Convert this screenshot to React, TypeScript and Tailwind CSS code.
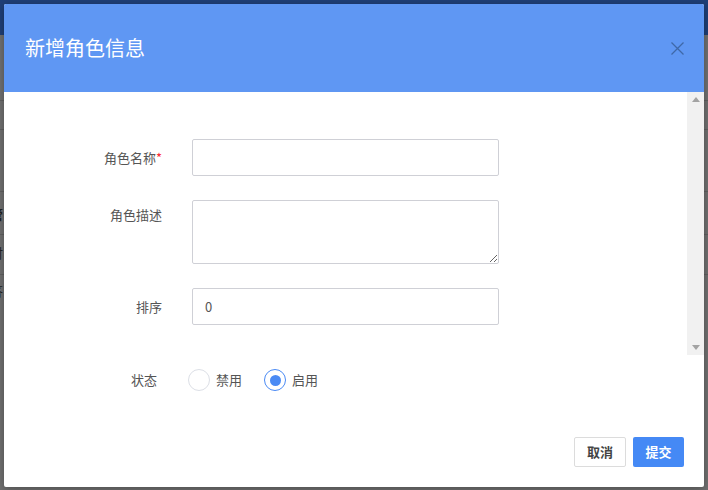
import { useState } from "react";

const font = { fontFamily: '"Noto Sans CJK SC", "Noto Sans", sans-serif' };

function Radio({ checked, label, onClick }: { checked: boolean; label: string; onClick: () => void }) {
  return (
    <button type="button" onClick={onClick} className="flex items-center gap-[6px]">
      <span
        className={
          checked
            ? "flex h-[22px] w-[22px] items-center justify-center rounded-full border border-[#4a8af4] bg-white"
            : "flex h-[22px] w-[22px] items-center justify-center rounded-full border border-[#dcdfe6] bg-white"
        }
      >
        {checked ? <span className="h-[11px] w-[11px] rounded-full bg-[#4a8af4]" /> : null}
      </span>
      <span className="text-[13px] text-[#555]">{label}</span>
    </button>
  );
}

export default function App() {
  const [status, setStatus] = useState<"off" | "on">("on");

  return (
    <div className="relative h-[490px] w-[708px] overflow-hidden bg-[#707070]" style={font}>
      {/* page behind the overlay */}
      <div className="h-[35px] bg-[#1f3f77]" />
      <div className="flex flex-col">
        <div className="mt-[65px] h-px bg-[#606060]" />
        <div className="mt-[28px] h-px bg-[#606060]" />
        <div className="mt-[61px] h-px bg-[#606060]" />
        <div className="ml-[-10px] mt-[12px] text-[13px] font-bold text-[#222]">管</div>
        <div className="mt-[10px] h-px bg-[#606060]" />
        <div className="ml-[-10px] mt-[8px] text-[13px] text-[#222]">时</div>
        <div className="mt-[12px] h-px bg-[#606060]" />
        <div className="ml-[-10px] mt-[6px] text-[13px] text-[#222]">答</div>
      </div>

      {/* dialog */}
      <div className="absolute left-[4px] top-[4px] flex h-[483px] w-[700px] flex-col overflow-hidden rounded-[2px] bg-white shadow-[0_2px_8px_rgba(0,0,0,0.3)]">
        <div className="flex h-[88px] shrink-0 items-center justify-between bg-[#5f97f3] pl-[21px] pr-[20px]">
          <h2 className="text-[20px] font-normal text-white">新增角色信息</h2>
          <button type="button" className="text-[#3f68a8]">
            <svg width="13" height="13" viewBox="0 0 13 13" fill="none" stroke="currentColor" strokeWidth="1.3">
              <path d="M0.5 0.5L12.5 12.5M12.5 0.5L0.5 12.5" />
            </svg>
          </button>
        </div>

        <div className="flex h-[263px] shrink-0">
          <div className="flex-1 pt-[47px]">
            <div className="flex items-center">
              <label className="w-[158px] text-right text-[13px] text-[#555]">
                角色名称<span className="text-red-500">*</span>
              </label>
              <input className="ml-[30px] h-[37px] w-[307px] rounded-[2px] border border-[#cfd0d6] px-3 text-[13px] text-[#555] outline-none" />
            </div>
            <div className="mt-[24px] flex items-start">
              <label className="w-[158px] pt-[5px] text-right text-[13px] text-[#555]">角色描述</label>
              <textarea className="ml-[30px] h-[64px] w-[307px] rounded-[2px] border border-[#cfd0d6] px-3 py-2 text-[13px] text-[#555] outline-none" />
            </div>
            <div className="mt-[24px] flex items-center">
              <label className="w-[158px] text-right text-[13px] text-[#555]">排序</label>
              <input
                defaultValue="0"
                className="ml-[30px] h-[37px] w-[307px] rounded-[2px] border border-[#cfd0d6] px-3 text-[13px] text-[#555] outline-none"
              />
            </div>
          </div>
          <div className="flex w-[17px] flex-col items-center justify-between bg-[#f1f1f1] py-[5px]">
            <svg width="8" height="5" viewBox="0 0 8 5" className="fill-[#a3a3a3]">
              <path d="M4 0L8 5H0z" />
            </svg>
            <svg width="8" height="5" viewBox="0 0 8 5" className="fill-[#a3a3a3]">
              <path d="M0 0H8L4 5z" />
            </svg>
          </div>
        </div>

        <div className="mt-[14px] flex h-[22px] items-center">
          <span className="w-[153px] text-right text-[13px] text-[#555]">状态</span>
          <div className="ml-[31px] flex items-center gap-[22px]">
            <Radio checked={status === "off"} label="禁用" onClick={() => setStatus("off")} />
            <Radio checked={status === "on"} label="启用" onClick={() => setStatus("on")} />
          </div>
        </div>

        <div className="mt-[46px] flex justify-end gap-[7px] pr-[20px]">
          <button
            type="button"
            className="h-[30px] w-[52px] rounded-[2px] border border-[#dcdcdc] bg-white text-[13px] font-bold text-[#444]"
          >
            取消
          </button>
          <button type="button" className="h-[30px] w-[51px] rounded-[2px] bg-[#4589f5] text-[13px] font-bold text-white">
            提交
          </button>
        </div>
      </div>
    </div>
  );
}
